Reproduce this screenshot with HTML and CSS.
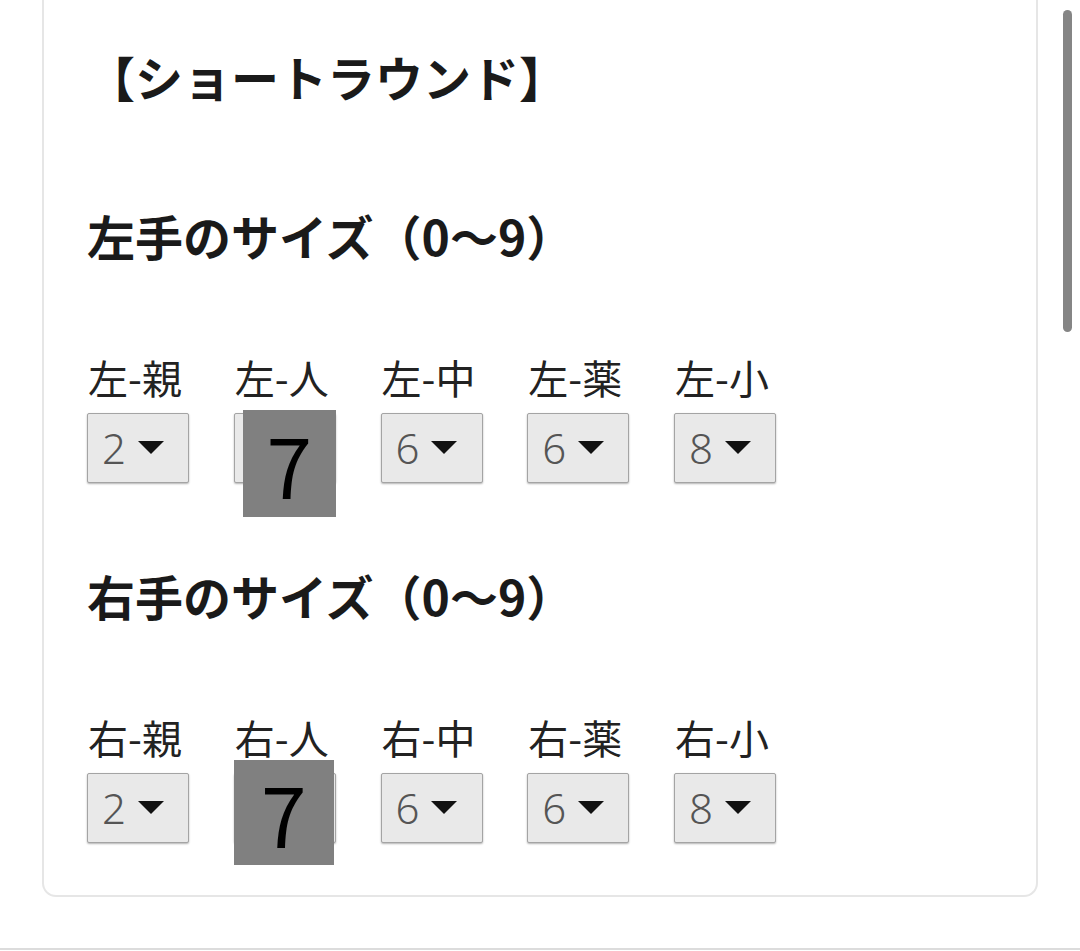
FILE: index.html
```html
<!DOCTYPE html>
<html lang="ja">
<head>
<meta charset="utf-8">
<link rel="stylesheet" href="styles.css">
</head>
<body>
<div class="page">
  <div class="card">
    <h1 class="title">【ショートラウンド】</h1>

    <section class="hand">
      <h2 class="hand-title">左手のサイズ（0〜9）</h2>
      <div class="fingers">
        <div class="finger"><div class="label">左-親</div><div class="select"><span class="val">2</span><span class="caret"></span></div></div>
        <div class="finger"><div class="label">左-人</div><div class="select covered"><span class="val">7</span><span class="caret"></span></div><div class="pop pop-a">7</div></div>
        <div class="finger"><div class="label">左-中</div><div class="select"><span class="val">6</span><span class="caret"></span></div></div>
        <div class="finger"><div class="label">左-薬</div><div class="select"><span class="val">6</span><span class="caret"></span></div></div>
        <div class="finger"><div class="label">左-小</div><div class="select"><span class="val">8</span><span class="caret"></span></div></div>
      </div>
    </section>

    <section class="hand">
      <h2 class="hand-title">右手のサイズ（0〜9）</h2>
      <div class="fingers">
        <div class="finger"><div class="label">右-親</div><div class="select"><span class="val">2</span><span class="caret"></span></div></div>
        <div class="finger"><div class="label">右-人</div><div class="select covered"><span class="val">7</span><span class="caret"></span></div><div class="pop pop-b">7</div></div>
        <div class="finger"><div class="label">右-中</div><div class="select"><span class="val">6</span><span class="caret"></span></div></div>
        <div class="finger"><div class="label">右-薬</div><div class="select"><span class="val">6</span><span class="caret"></span></div></div>
        <div class="finger"><div class="label">右-小</div><div class="select"><span class="val">8</span><span class="caret"></span></div></div>
      </div>
    </section>
  </div>
  <div class="rule"></div>
  <div class="scrollbar"></div>
</div>
</body>
</html>
```

FILE: styles.css
```css
html, body {
  margin: 0;
  padding: 0;
  background: #ffffff;
}

body {
  font-family: "Noto Sans CJK JP", "Noto Sans", sans-serif;
  color: #1a1a1a;
  overflow: hidden;
}

.page {
  position: relative;
  width: 1080px;
  height: 951px;
}

.card {
  margin: 0 42px;
  border: 2px solid #e6e6e6;
  border-top: 0;
  border-radius: 0 0 14px 14px;
  padding: 40px 44px 52px 43px;
}

.title {
  margin: 0;
  font-size: 48px;
  line-height: 72px;
  font-weight: 700;
}

.hand {
  margin-top: 87px;
}

.hand + .hand {
  margin-top: 76px;
}

.hand-title {
  margin: 0;
  font-size: 48px;
  line-height: 72px;
  font-weight: 700;
}

.fingers {
  display: flex;
  gap: 44.75px;
  margin-top: 82px;
}

.finger {
  position: relative;
  width: 102px;
}

.label {
  font-size: 40px;
  line-height: 40px;
  color: #222;
  white-space: nowrap;
  margin-top: 4px;
  margin-bottom: 16px;
  padding-left: 1px;
}

.select {
  box-sizing: border-box;
  height: 70px;
  width: 102px;
  background: #e9e9e9;
  border: 1px solid #a4a4a4;
  border-radius: 2px;
  box-shadow: 0 1px 2px rgba(0,0,0,0.3);
  display: flex;
  align-items: center;
  padding-left: 14px;
  gap: 12px;
}

.val {
  font-family: "Noto Sans", sans-serif;
  font-size: 42px;
  font-weight: 300;
  line-height: 1;
  color: #555;
}

.covered .val {
  visibility: hidden;
}

.caret {
  width: 0;
  height: 0;
  border-left: 13.5px solid transparent;
  border-right: 13.5px solid transparent;
  border-top: 13px solid #111;
  margin-top: -2px;
}

.pop {
  position: absolute;
  background: #808080;
  color: #000;
  font-family: "Noto Sans CJK JP", "Noto Sans", sans-serif;
  font-size: 82px;
  font-weight: 400;
  line-height: 1;
  display: flex;
  align-items: center;
  justify-content: center;
}

.pop-a {
  left: 9px;
  top: 57px;
  width: 93px;
  height: 107px;
}

.pop-b {
  left: 0;
  top: 47px;
  width: 100px;
  height: 105px;
}

.rule {
  margin-top: 51px;
  height: 2px;
  background: #dcdcdc;
}

.scrollbar {
  position: absolute;
  right: 8px;
  top: 10px;
  width: 9px;
  height: 322px;
  border-radius: 5px;
  background: #858585;
}
```
